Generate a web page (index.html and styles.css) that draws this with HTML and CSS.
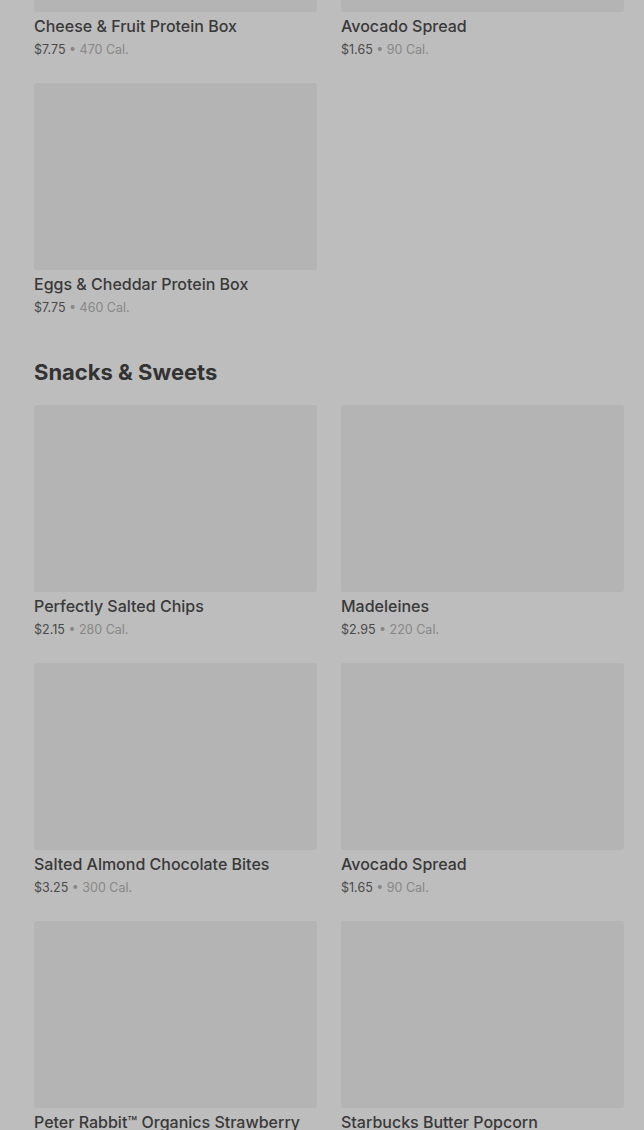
FILE: index.html
```html
<!DOCTYPE html>
<html>
<head>
<meta charset="utf-8">
<link rel="stylesheet" href="styles.css">
</head>
<body>
<div class="page">
  <section class="section first">
    <div class="grid">
      <div class="card"><div class="thumb"></div><div class="name">Cheese &amp; Fruit Protein Box</div><div class="meta"><span class="price">$7.75</span> • 470 Cal.</div></div>
      <div class="card"><div class="thumb"></div><div class="name">Avocado Spread</div><div class="meta"><span class="price">$1.65</span> • 90 Cal.</div></div>
      <div class="card"><div class="thumb"></div><div class="name">Eggs &amp; Cheddar Protein Box</div><div class="meta"><span class="price">$7.75</span> • 460 Cal.</div></div>
    </div>
  </section>
  <section class="section">
    <h2 class="heading">Snacks &amp; Sweets</h2>
    <div class="grid">
      <div class="card"><div class="thumb"></div><div class="name">Perfectly Salted Chips</div><div class="meta"><span class="price">$2.15</span> • 280 Cal.</div></div>
      <div class="card"><div class="thumb"></div><div class="name">Madeleines</div><div class="meta"><span class="price">$2.95</span> • 220 Cal.</div></div>
      <div class="card"><div class="thumb"></div><div class="name">Salted Almond Chocolate Bites</div><div class="meta"><span class="price">$3.25</span> • 300 Cal.</div></div>
      <div class="card"><div class="thumb"></div><div class="name">Avocado Spread</div><div class="meta"><span class="price">$1.65</span> • 90 Cal.</div></div>
      <div class="card"><div class="thumb"></div><div class="name">Peter Rabbit™ Organics Strawberry</div><div class="meta"><span class="price">$1.25</span> • 60 Cal.</div></div>
      <div class="card"><div class="thumb"></div><div class="name">Starbucks Butter Popcorn</div><div class="meta"><span class="price">$2.45</span> • 160 Cal.</div></div>
    </div>
  </section>
</div>
</body>
</html>
```
FILE: styles.css
```css
html, body {
  margin: 0;
  padding: 0;
  background: #bdbdbd;
  height: 1130px;
  overflow: hidden;
}
.page {
  padding: 0 20px 0 34px;
  margin-top: -175px;
  font-family: Inter, "Noto Sans", sans-serif;
}
.section.first {
  margin-bottom: 42px;
}
.heading {
  margin: 0 0 19px;
  font-size: 22px;
  line-height: 28px;
  font-weight: 700;
  color: #333;
  letter-spacing: 0;
}
.grid {
  display: grid;
  grid-template-columns: 283px 283px;
  column-gap: 24px;
  row-gap: 25px;
}
.thumb {
  height: 187px;
  background: #b4b4b4;
  border-radius: 3px;
}
.name {
  margin-top: 4px;
  font-size: 16px;
  line-height: 20px;
  font-weight: 500;
  color: #393939;
  white-space: nowrap;
}
.meta {
  margin-top: 6px;
  font-size: 12.5px;
  line-height: 16px;
  color: #878787;
}
.price {
  color: #4a4a4a;
}
```
